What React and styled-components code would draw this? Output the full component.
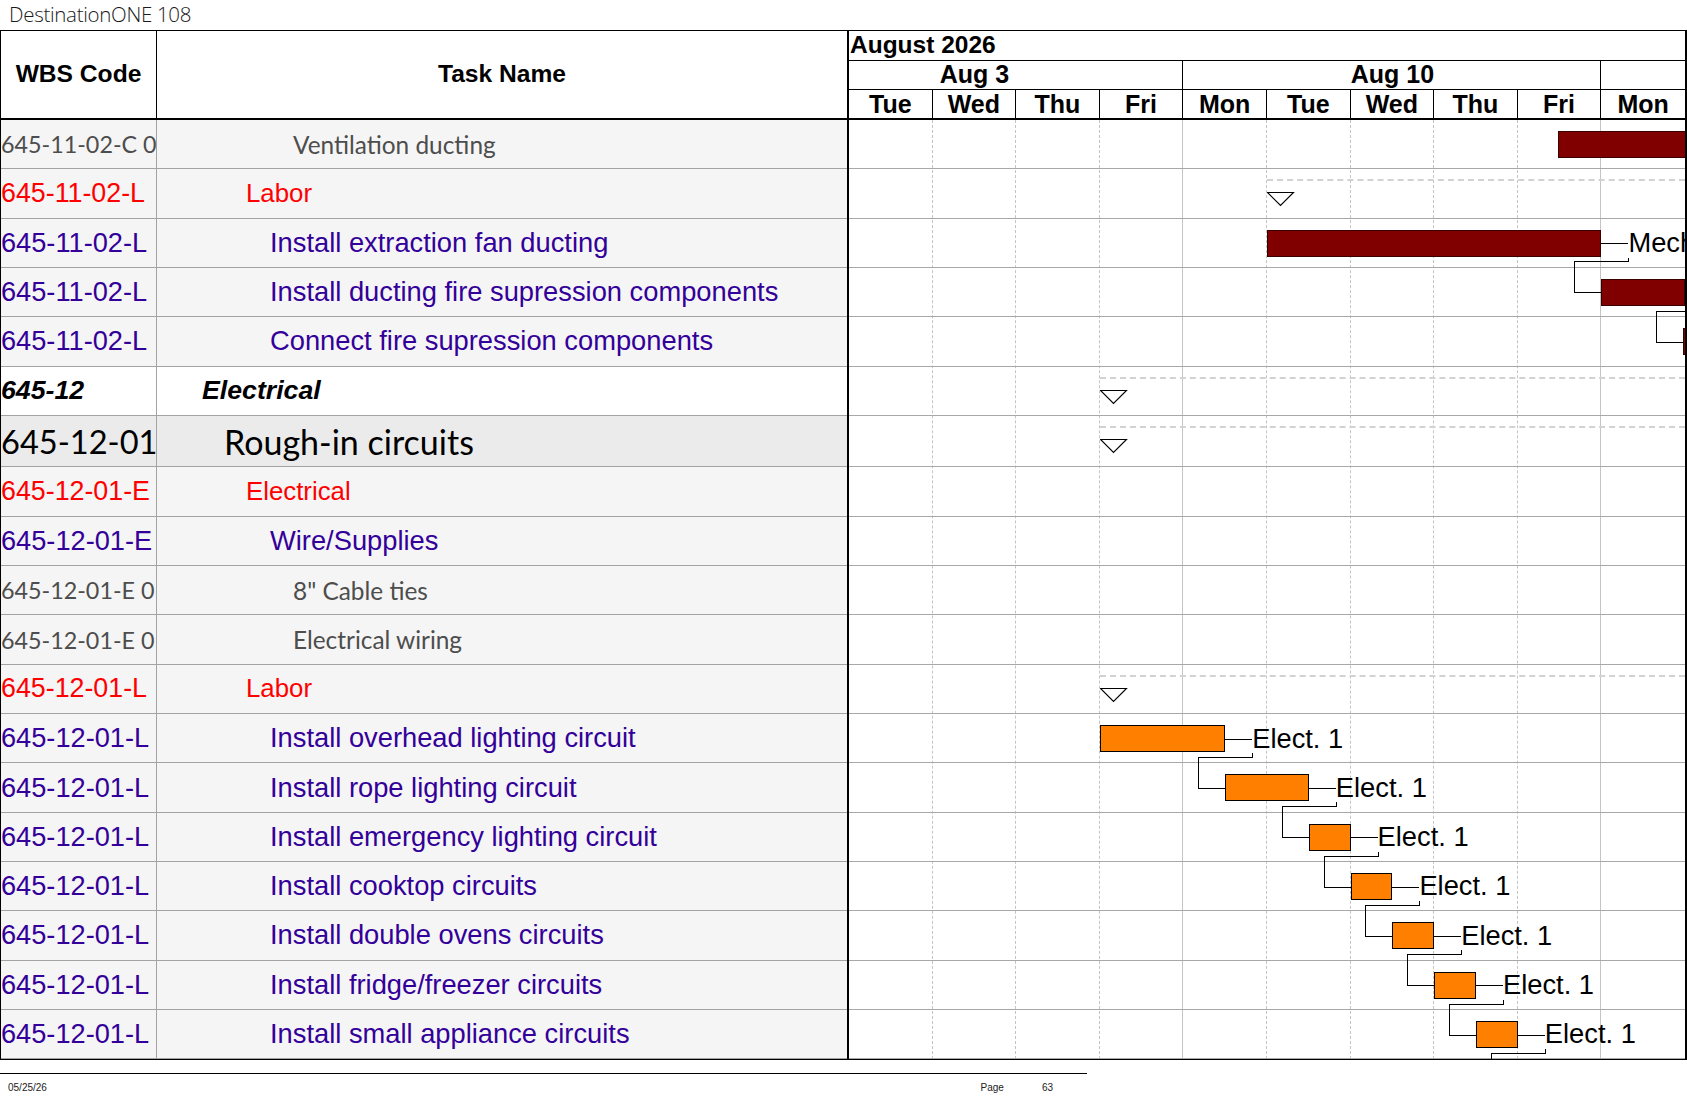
import React from 'react';
import styled, { createGlobalStyle, css } from 'styled-components';

const DAY = 83.6;
const ROW_H = 49.32;
const GROUP_ROW_H = 51.6;
const LABEL_GAP = 27;

const GlobalStyle = createGlobalStyle`
  html, body {
    margin: 0;
    padding: 0;
    background: #fff;
  }

  body {
    font-family: "Liberation Sans", Arial, sans-serif;
    overflow: hidden;
  }

  * {
    box-sizing: border-box;
  }
`;

const Page = styled.div`
  width: 1687px;
  height: 1097px;
  display: flex;
  flex-direction: column;
`;

const TitleBar = styled.div`
  height: 30px;
  padding: 3px 0 0 9px;
  font-family: "Open Sans", Lato, sans-serif;
  font-weight: 300;
  font-size: 20.5px;
  line-height: 22px;
  letter-spacing: -0.3px;
  color: #1a1a1a;
`;

const Sheet = styled.div`
  display: flex;
  border-top: 1px solid #000;
  border-bottom: 1px solid #000;
  border-left: 1px solid #000;
  border-right: 2px solid #000;
`;

const LeftPane = styled.div`
  width: 846px;
  flex: none;
`;

const LeftHeader = styled.div`
  display: grid;
  grid-template-columns: 156px 1fr;
  height: 89px;
  border-bottom: 2px solid #000;
  font-weight: 700;
  font-size: 24.6px;
  color: #000;
`;

const HeaderCell = styled.div`
  display: flex;
  align-items: center;
  justify-content: center;
  border-right: ${(p) => (p.$divider ? '1px solid #000' : 'none')};
  padding-bottom: 2px;
`;

const kindText = {
  resource: css`
    font-family: Lato, "Open Sans", sans-serif;
    font-size: 24.4px;
    color: #4d4d4d;
  `,
  category: css`
    font-size: 25.8px;
    color: #f00;
  `,
  task: css`
    font-size: 27.3px;
    color: #330099;
  `,
  phase: css`
    font-size: 26.7px;
    font-weight: 700;
    font-style: italic;
    color: #000;
  `,
  group: css`
    font-family: Lato, "Open Sans", sans-serif;
    font-size: 34px;
    color: #000;
  `,
};

const codeSize = {
  resource: 23.3,
  group: 32.6,
  task: 27.2,
  category: 26.8,
};

const indent = {
  phase: 45,
  group: 67,
  category: 89,
  task: 113,
  resource: 136,
};

const rowBg = {
  phase: '#ffffff',
  group: '#ebebeb',
};

const LeftRow = styled.div`
  display: grid;
  grid-template-columns: 156px 1fr;
  height: ${(p) => (p.$kind === 'group' ? GROUP_ROW_H : ROW_H)}px;
  border-bottom: 1px solid #a3a3a3;
  background: ${(p) => rowBg[p.$kind] || '#f5f5f5'};
  white-space: nowrap;
  ${(p) => kindText[p.$kind]}
`;

const CodeCell = styled.div`
  display: flex;
  align-items: center;
  overflow: hidden;
  border-right: 1px solid #a3a3a3;
  ${(p) => codeSize[p.$kind] && `font-size: ${codeSize[p.$kind]}px;`}
`;

const NameCell = styled.div`
  display: flex;
  align-items: center;
  overflow: hidden;
  padding-left: ${(p) => indent[p.$kind]}px;
`;

const ChartPane = styled.div`
  flex: 1;
  min-width: 0;
  border-left: 2px solid #000;
`;

const MonthRow = styled.div`
  height: 30px;
  border-bottom: 1px solid #000;
  padding-left: 1px;
  font-weight: 700;
  font-size: 24.5px;
  line-height: 28px;
`;

const WeekRow = styled.div`
  display: flex;
  height: 29px;
  border-bottom: 1px solid #000;
  overflow: hidden;
`;

const WeekCell = styled.div`
  display: flex;
  flex: none;
  width: ${(p) => p.$days * DAY}px;
  overflow: hidden;
  border-right: ${(p) => (p.$last ? 'none' : '1px solid #000')};
`;

const WeekLabel = styled.div`
  flex: none;
  width: ${5 * DAY}px;
  margin-left: ${(p) => -p.$hidden * DAY}px;
  text-align: center;
  font-weight: 700;
  font-size: 25px;
  line-height: 27px;
`;

const DayRow = styled.div`
  display: flex;
  height: 30px;
  border-bottom: 2px solid #000;
`;

const DayCell = styled.div`
  flex: none;
  width: ${DAY}px;
  text-align: center;
  font-weight: 700;
  font-size: 25px;
  line-height: 28px;
  border-right: ${(p) => (p.$last ? 'none' : '1px solid #000')};
`;

const ChartBody = styled.div`
  position: relative;
  overflow: hidden;
  background: #fff;
`;

const GridLayer = styled.div`
  position: absolute;
  inset: 0;
  display: flex;
`;

const DayLine = styled.div`
  flex: none;
  width: ${DAY}px;
  border-right: ${(p) =>
    p.$last ? 'none' : p.$weekEnd ? '1px solid #c4c4c4' : '1px dashed #c4c4c4'};
`;

const ChartRow = styled.div`
  position: relative;
  height: ${(p) => (p.$kind === 'group' ? GROUP_ROW_H : ROW_H)}px;
  border-bottom: 1px solid #a8a8a8;
`;

const Bar = styled.div`
  position: absolute;
  top: 11px;
  height: 27px;
  background: ${(p) => (p.$tone === 'orange' ? '#ff8000' : '#800000')};
  border: 1px solid ${(p) => (p.$tone === 'orange' ? '#000' : '#3a0000')};
`;

const BarLabel = styled.div`
  position: absolute;
  top: 11px;
  height: 27px;
  display: flex;
  align-items: center;
  font-size: 27.3px;
  color: #000;
  white-space: nowrap;
`;

const SummaryLine = styled.div`
  position: absolute;
  top: 10px;
  right: 0;
  border-top: 2px dashed #d2d2d2;
`;

const Milestone = styled.svg`
  position: absolute;
  top: 23px;
`;

const Connectors = styled.svg`
  position: absolute;
  top: 0;
  left: 0;
  pointer-events: none;
`;

const FooterBar = styled.div`
  display: flex;
  width: 1087px;
  margin-top: 13px;
  padding-top: 8px;
  border-top: 1px solid #000;
  font-size: 10px;
  line-height: 12px;
  color: #222;
`;

const FooterDate = styled.span`
  margin-left: 8px;
`;

const FooterPage = styled.span`
  margin-left: auto;
`;

const FooterNumber = styled.span`
  margin-left: 38px;
  margin-right: 34px;
`;

const days = ['Tue', 'Wed', 'Thu', 'Fri', 'Mon', 'Tue', 'Wed', 'Thu', 'Fri', 'Mon'];

// the third week starts on the last visible day; its label falls off the page
const weeks = [
  { label: 'Aug 3', days: 4, hidden: 1 },
  { label: 'Aug 10', days: 5, hidden: 0 },
  { label: '', days: 1, hidden: 0 },
];

const rows = [
  { code: '645-11-02-C 0', name: 'Ventilation ducting', kind: 'resource', bar: { start: 8.48, end: 11, tone: 'maroon' } },
  { code: '645-11-02-L', name: 'Labor', kind: 'category', summary: 5 },
  { code: '645-11-02-L', name: 'Install extraction fan ducting', kind: 'task', bar: { start: 5, end: 9, tone: 'maroon', label: 'Mech' } },
  { code: '645-11-02-L', name: 'Install ducting fire supression components', kind: 'task', bar: { start: 9, end: 10, tone: 'maroon', link: true } },
  { code: '645-11-02-L', name: 'Connect fire supression components', kind: 'task', bar: { start: 9.975, end: 11, tone: 'maroon' } },
  { code: '645-12', name: 'Electrical', kind: 'phase', summary: 3 },
  { code: '645-12-01', name: 'Rough-in circuits', kind: 'group', summary: 3 },
  { code: '645-12-01-E', name: 'Electrical', kind: 'category' },
  { code: '645-12-01-E', name: 'Wire/Supplies', kind: 'task' },
  { code: '645-12-01-E 0', name: '8" Cable ties', kind: 'resource' },
  { code: '645-12-01-E 0', name: 'Electrical wiring', kind: 'resource' },
  { code: '645-12-01-L', name: 'Labor', kind: 'category', summary: 3 },
  { code: '645-12-01-L', name: 'Install overhead lighting circuit', kind: 'task', bar: { start: 3, end: 4.5, tone: 'orange', label: 'Elect. 1' } },
  { code: '645-12-01-L', name: 'Install rope lighting circuit', kind: 'task', bar: { start: 4.5, end: 5.5, tone: 'orange', label: 'Elect. 1' } },
  { code: '645-12-01-L', name: 'Install emergency lighting circuit', kind: 'task', bar: { start: 5.5, end: 6, tone: 'orange', label: 'Elect. 1' } },
  { code: '645-12-01-L', name: 'Install cooktop circuits', kind: 'task', bar: { start: 6, end: 6.5, tone: 'orange', label: 'Elect. 1' } },
  { code: '645-12-01-L', name: 'Install double ovens circuits', kind: 'task', bar: { start: 6.5, end: 7, tone: 'orange', label: 'Elect. 1' } },
  { code: '645-12-01-L', name: 'Install fridge/freezer circuits', kind: 'task', bar: { start: 7, end: 7.5, tone: 'orange', label: 'Elect. 1' } },
  { code: '645-12-01-L', name: 'Install small appliance circuits', kind: 'task', bar: { start: 7.5, end: 8, tone: 'orange', label: 'Elect. 1' } },
];

// predecessor -> successor; 19 is the next task below the page
const links = [
  [2, 3],
  [3, 4],
  [12, 13],
  [13, 14],
  [14, 15],
  [15, 16],
  [16, 17],
  [17, 18],
  [18, 19],
];

const heightOf = (r) => (r.kind === 'group' ? GROUP_ROW_H : ROW_H);
const tops = [];
rows.reduce((y, r) => {
  tops.push(y);
  return y + heightOf(r);
}, 0);
const bodyHeight = rows.reduce((s, r) => s + heightOf(r), 0);
const px = (v) => Math.round(v) + 0.5;

function linkPath([from, to]) {
  const a = rows[from].bar;
  const top = tops[from];
  const nextStart = rows[to] ? rows[to].bar.start : 8;
  const nextTop = rows[to] ? tops[to] : bodyHeight;
  const lx = px(a.end * DAY + LABEL_GAP);
  const y1 = px(top + 38);
  const yMid = px(top + heightOf(rows[from]) - 6.5);
  const xBack = px(nextStart * DAY - 27);
  const yTo = px(nextTop + 24.5);
  const xTo = Math.round(nextStart * DAY);
  return `M${lx} ${y1} V${yMid} H${xBack} V${yTo} H${xTo}`;
}

function Timeline() {
  return (
    <ChartBody>
      <GridLayer>
        {days.map((d, i) => (
          <DayLine key={i} $weekEnd={i === 3 || i === 8} $last={i === days.length - 1} />
        ))}
      </GridLayer>
      {rows.map((r, i) => (
        <ChartRow key={i} $kind={r.kind}>
          {r.summary !== undefined && (
            <>
              <SummaryLine style={{ left: r.summary * DAY }} />
              <Milestone width="28" height="15" viewBox="0 0 28 15" style={{ left: r.summary * DAY }}>
                <path d="M0.5 0.5 H26.5 L13.5 13.5 Z" fill="#fff" stroke="#000" strokeWidth="1.2" />
              </Milestone>
            </>
          )}
          {r.bar && (
            <>
              <Bar
                $tone={r.bar.tone}
                style={{ left: r.bar.start * DAY, width: (r.bar.end - r.bar.start) * DAY }}
              />
              {r.bar.label && (
                <BarLabel style={{ left: r.bar.end * DAY + LABEL_GAP }}>{r.bar.label}</BarLabel>
              )}
            </>
          )}
        </ChartRow>
      ))}
      <Connectors width="836" height={bodyHeight} shapeRendering="crispEdges">
        {rows.map((r, i) =>
          r.bar && (r.bar.label || r.bar.link) ? (
            <line
              key={`l${i}`}
              x1={r.bar.end * DAY}
              x2={r.bar.end * DAY + LABEL_GAP}
              y1={px(tops[i] + 24.5)}
              y2={px(tops[i] + 24.5)}
              stroke="#000"
              strokeWidth="1"
            />
          ) : null
        )}
        {links.map((l) => (
          <path key={l.join('-')} d={linkPath(l)} fill="none" stroke="#000" strokeWidth="1" />
        ))}
      </Connectors>
    </ChartBody>
  );
}

export default function App() {
  return (
    <Page>
      <GlobalStyle />
      <TitleBar>DestinationONE 108</TitleBar>
      <Sheet>
        <LeftPane>
          <LeftHeader>
            <HeaderCell $divider>WBS Code</HeaderCell>
            <HeaderCell>Task Name</HeaderCell>
          </LeftHeader>
          {rows.map((r, i) => (
            <LeftRow key={i} $kind={r.kind}>
              <CodeCell $kind={r.kind}>{r.code}</CodeCell>
              <NameCell $kind={r.kind}>{r.name}</NameCell>
            </LeftRow>
          ))}
        </LeftPane>
        <ChartPane>
          <MonthRow>August 2026</MonthRow>
          <WeekRow>
            {weeks.map((w, i) => (
              <WeekCell key={i} $days={w.days} $last={i === weeks.length - 1}>
                {w.label && <WeekLabel $hidden={w.hidden}>{w.label}</WeekLabel>}
              </WeekCell>
            ))}
          </WeekRow>
          <DayRow>
            {days.map((d, i) => (
              <DayCell key={i} $last={i === days.length - 1}>
                {d}
              </DayCell>
            ))}
          </DayRow>
          <Timeline />
        </ChartPane>
      </Sheet>
      <FooterBar>
        <FooterDate>05/25/26</FooterDate>
        <FooterPage>Page</FooterPage>
        <FooterNumber>63</FooterNumber>
      </FooterBar>
    </Page>
  );
}
